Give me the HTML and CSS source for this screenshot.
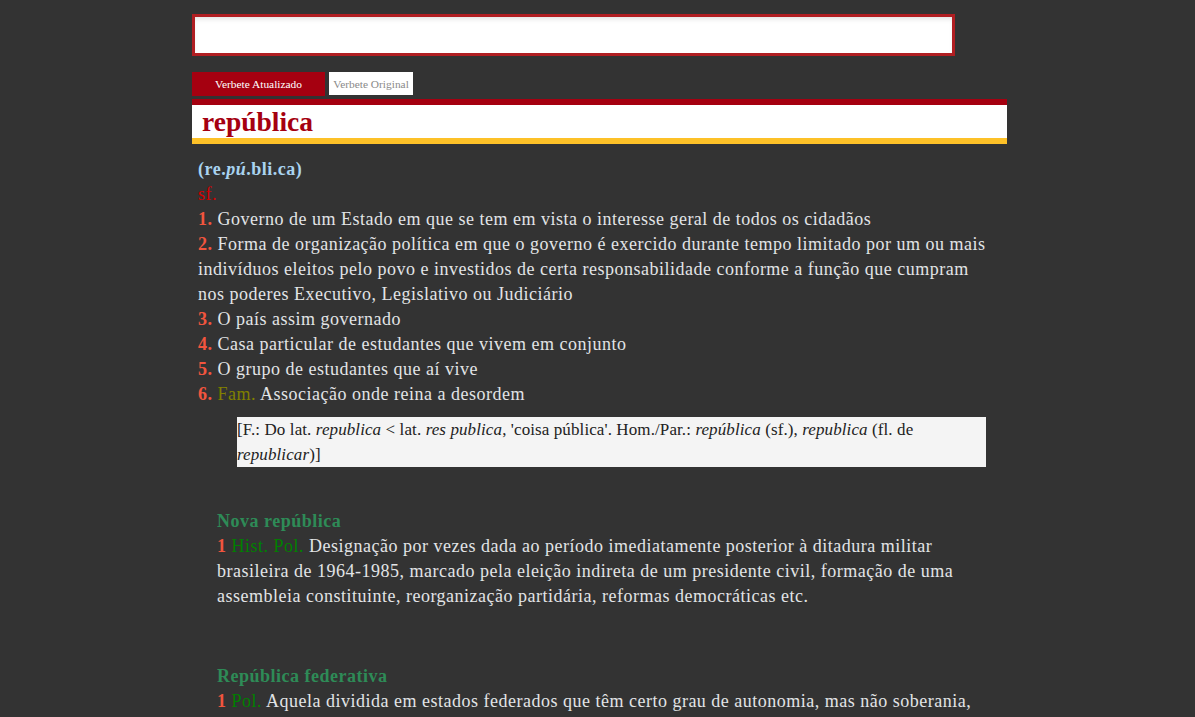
FILE: index.html
```html
<!DOCTYPE html>
<html lang="pt">
<head>
<meta charset="utf-8">
<title>república</title>
<link rel="stylesheet" href="styles.css">
</head>
<body>
<div class="page">
  <div class="search"></div>
  <div class="tabs">
    <div class="tab tab-active">Verbete Atualizado</div>
    <div class="tab tab-plain">Verbete Original</div>
  </div>
  <div class="headword"><h1>república</h1></div>
  <div class="entry">
    <div class="pron">(re.<i>pú</i>.bli.ca)</div>
    <div class="cls">sf.</div>
    <div class="sense"><b class="num">1.</b> Governo de um Estado em que se tem em vista o interesse geral de todos os cidadãos</div>
    <div class="sense"><b class="num">2.</b> Forma de organização política em que o governo é exercido durante tempo limitado por um ou mais indivíduos eleitos pelo povo e investidos de certa responsabilidade conforme a função que cumpram nos poderes Executivo, Legislativo ou Judiciário</div>
    <div class="sense"><b class="num">3.</b> O país assim governado</div>
    <div class="sense"><b class="num">4.</b> Casa particular de estudantes que vivem em conjunto</div>
    <div class="sense"><b class="num">5.</b> O grupo de estudantes que aí vive</div>
    <div class="sense"><b class="num">6.</b> <span class="fam">Fam.</span> Associação onde reina a desordem</div>
    <div class="etym">[F.: Do lat. <i>republica</i> &lt; lat. <i>res publica</i>, 'coisa pública'. Hom./Par.: <i>república</i> (sf.), <i>republica</i> (fl. de <i>republicar</i>)]</div>
    <div class="locution">
      <div class="loc-title">Nova república</div>
      <div class="loc-sense"><b class="num">1</b> <span class="rub">Hist. Pol.</span> Designação por vezes dada ao período imediatamente posterior à ditadura militar brasileira de 1964-1985, marcado pela eleição indireta de um presidente civil, formação de uma assembleia constituinte, reorganização partidária, reformas democráticas etc.</div>
    </div>
    <div class="locution">
      <div class="loc-title">República federativa</div>
      <div class="loc-sense"><b class="num">1</b> <span class="rub">Pol.</span> Aquela dividida em estados federados que têm certo grau de autonomia, mas não soberania, e que se submetem a um governo central.</div>
    </div>
  </div>
</div>
</body>
</html>
```

FILE: styles.css
```css
html, body {
  margin: 0;
  padding: 0;
  background: #333333;
  height: 100%;
  overflow: hidden;
}
body {
  font-family: "Liberation Serif", "DejaVu Serif", serif;
  color: #e2e4e6;
}
.page {
  width: 815px;
  margin: 0 auto;
  padding: 14px 0 0 4px;
}
.search {
  width: 757px;
  height: 36px;
  background: #ffffff;
  border: 3px solid #b01e22;
  box-shadow: inset 0 4px 5px -2px rgba(0,0,0,0.12);
}
.tabs {
  display: flex;
  gap: 4px;
  margin-top: 16px;
  height: 24px;
}
.tab {
  font-size: 11.4px;
  line-height: 24px;
  text-align: center;
}
.tab-active {
  width: 133px;
  background: #a50010;
  color: #ffffff;
}
.tab-plain {
  width: 84px;
  height: 23px;
  background: #ffffff;
  color: #8a8a8a;
}
.headword {
  margin-top: 3px;
  background: #ffffff;
  border-top: 6px solid #a50010;
  border-bottom: 6px solid #fdc128;
  height: 33px;
  padding-left: 10px;
}
.headword h1 {
  margin: 0;
  font-size: 27.5px;
  line-height: 33px;
  font-weight: bold;
  color: #a50010;
}
.entry {
  padding: 13px 20px 0 6px;
  font-size: 18px;
  letter-spacing: 0.5px;
  line-height: 25px;
}
.pron {
  font-weight: bold;
  color: #a9d3f0;
}
.cls {
  color: #d40000;
}
.num {
  color: #f2553e;
}
.fam {
  color: #808000;
}
.etym {
  margin: 10px 1px 0 39px;
  background: #f4f4f4;
  color: #222222;
  font-size: 17px;
  letter-spacing: 0.1px;
}
.locution {
  margin: 42px 12px 0 19px;
}
.locution + .locution {
  margin-top: 55px;
}
.loc-title {
  font-weight: bold;
  color: #2e8b57;
}
.rub {
  color: #008000;
}
```
